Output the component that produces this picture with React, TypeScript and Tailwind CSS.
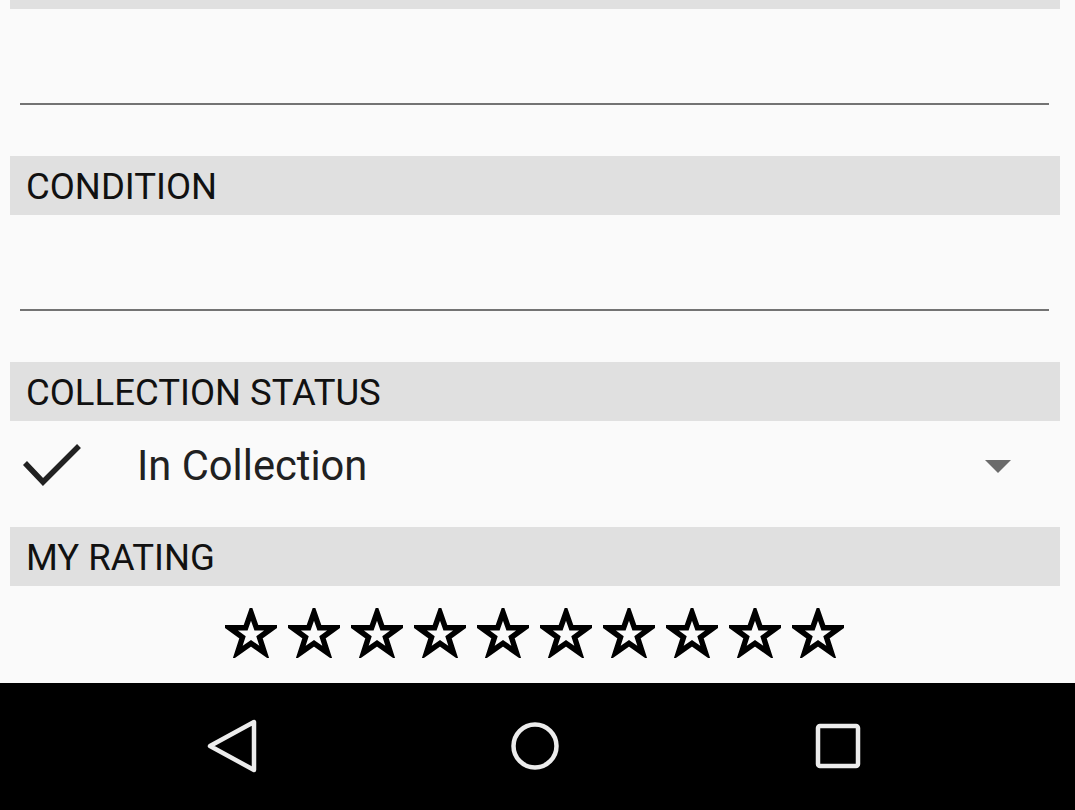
import React from "react";

function SectionHeader({ label }: { label: string }) {
  return (
    <div className="ml-[10px] mr-[15px] flex h-[59px] items-center bg-[#e0e0e0] pl-[16px] pt-[3px]">
      <span className="text-[36.5px] leading-none text-[#111]">{label}</span>
    </div>
  );
}

function EmptyField() {
  return (
    <div className="flex h-[147px] flex-col px-[20px]">
      <div className="mt-[94px] h-[2px] w-[1029px] bg-[#737373]" />
    </div>
  );
}

function Star() {
  return (
    <svg width="52" height="50" viewBox="0 0 52 50" className="shrink-0">
      <polygon
        points="26,4.5 31.4,19.8 47.5,19.8 34.5,29.4 39.5,44.8 26,35.3 12.5,44.8 17.5,29.4 4.5,19.8 20.6,19.8"
        fill="none"
        stroke="#000"
        strokeWidth="5.5"
        strokeLinejoin="miter"
      />
    </svg>
  );
}

export default function App() {
  return (
    <div
      className="flex h-[810px] w-[1075px] flex-col overflow-hidden bg-[#fafafa]"
      style={{ fontFamily: "Roboto, 'Liberation Sans', sans-serif" }}
    >
      <div className="ml-[10px] mr-[15px] h-[9px] bg-[#e0e0e0]" />
      <EmptyField />
      <SectionHeader label="CONDITION" />
      <EmptyField />
      <SectionHeader label="COLLECTION STATUS" />

      <div className="flex h-[106px] items-center px-[22px] pb-[16px]">
        <svg width="60" height="46" viewBox="0 0 60 46" className="-mt-[2px] shrink-0">
          <polyline
            points="3,21 21,40 57,4"
            fill="none"
            stroke="#212121"
            strokeWidth="5.5"
          />
        </svg>
        <span className="ml-[55px] text-[41.7px] leading-none text-[#212121]">
          In Collection
        </span>
        <div className="ml-auto mr-[42px]">
          <svg width="26" height="13" viewBox="0 0 26 13" className="block">
            <polygon points="0,0 26,0 13,13" fill="#6b6b6b" />
          </svg>
        </div>
      </div>

      <SectionHeader label="MY RATING" />

      <div className="flex h-[97px] items-center justify-center gap-[11px] pb-[3px] pr-[6px]">
        {Array.from({ length: 10 }).map((_, i) => (
          <Star key={i} />
        ))}
      </div>

      <div className="flex flex-1 items-center justify-center gap-[203px] bg-black pb-[1px] pr-[6px]">
        <div className="flex w-[100px] justify-center">
          <svg width="52" height="54" viewBox="0 0 52 54">
            <polygon
              points="4,27 48,3 48,51"
              fill="none"
              stroke="#ececec"
              strokeWidth="4.5"
              strokeLinejoin="round"
            />
          </svg>
        </div>
        <div className="flex w-[100px] justify-center">
          <svg width="52" height="52" viewBox="0 0 52 52">
            <circle cx="26" cy="26" r="21.5" fill="none" stroke="#ececec" strokeWidth="4.5" />
          </svg>
        </div>
        <div className="flex w-[100px] justify-center">
          <svg width="46" height="46" viewBox="0 0 46 46">
            <rect
              x="3"
              y="3"
              width="40"
              height="40"
              rx="2"
              fill="none"
              stroke="#ececec"
              strokeWidth="4.5"
            />
          </svg>
        </div>
      </div>
    </div>
  );
}
